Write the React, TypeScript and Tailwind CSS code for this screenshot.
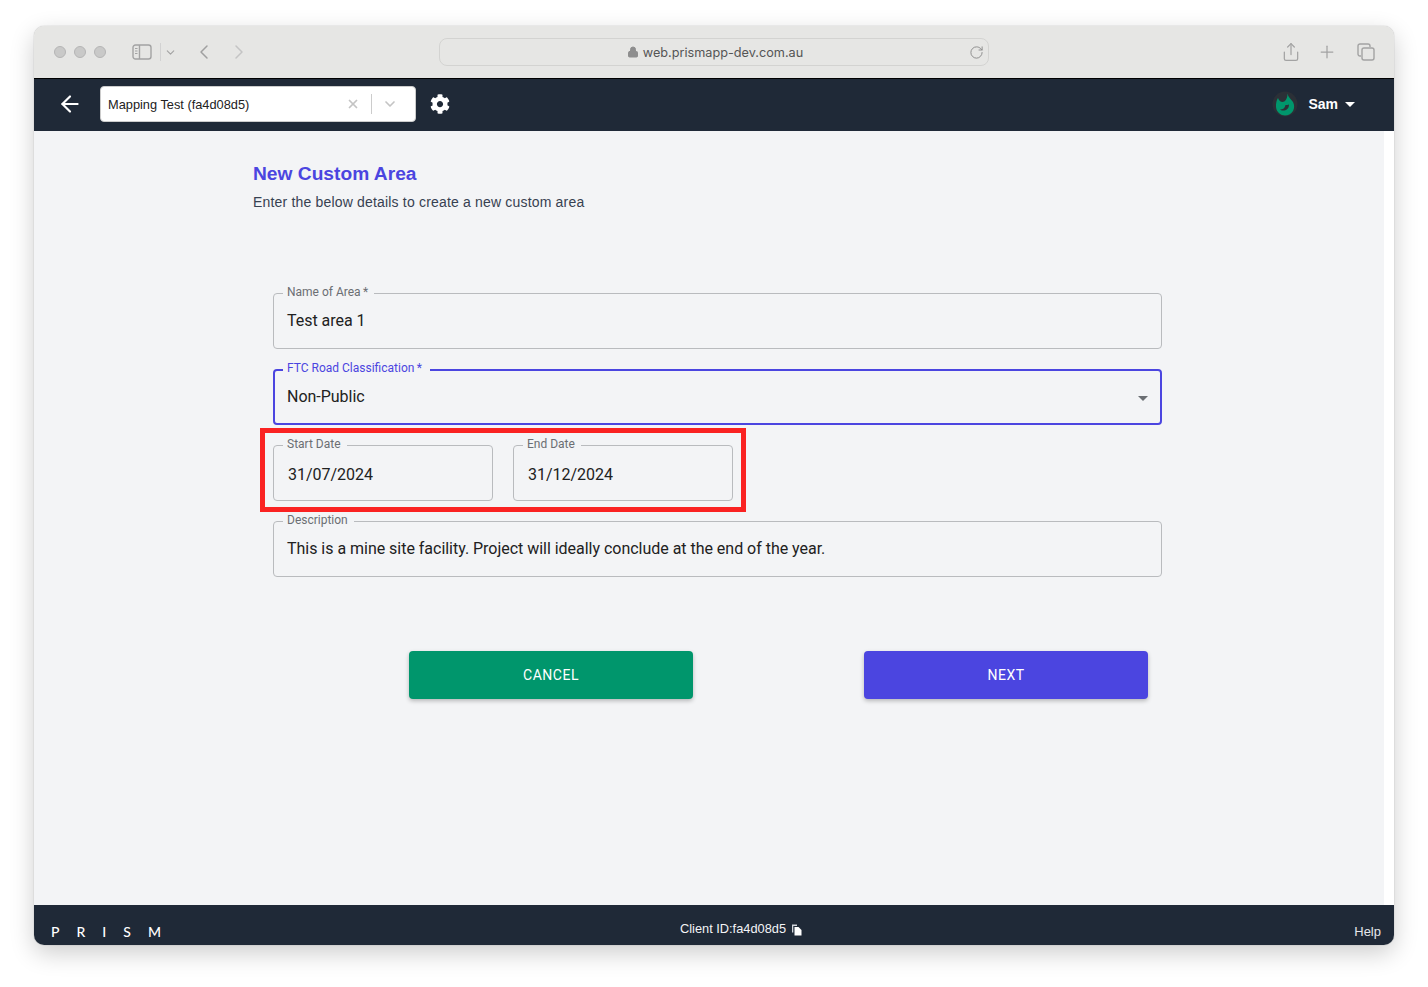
import { ArrowLeft, ChevronDown, ChevronLeft, ChevronRight, Lock, Plus, RotateCw, Share, X } from "lucide-react";
import { FaCog } from "react-icons/fa";

function OutlinedField({
    label,
    value,
    focused = false,
    className = "",
    valueClass = "pl-[14px]",
    children,
}: {
    label: string;
    value: string;
    focused?: boolean;
    className?: string;
    valueClass?: string;
    children?: React.ReactNode;
}) {
    return (
        <div className={`relative flex h-14 items-center pr-[14px] ${className}`}>
            <span className={`text-base tracking-[-0.025px] text-[#212121] ${valueClass}`}>{value}</span>
            {children}
            {/* Notched outline */}
            <fieldset
                className={`pointer-events-none absolute inset-x-0 bottom-0 rounded-[4px] pl-[9px] ${
                    focused ? "-top-[7px] border-2 border-[#4b45e0]" : "-top-[8px] border border-[#b9bbbe]"
                }`}
            >
                <legend
                    className={`pl-[4px] text-xs leading-[16px] ${focused ? "-ml-px pr-[8px] text-[#4b45e0]" : "pr-[6px] text-[#6b6e73]"}`}
                >
                    <span className={focused ? "relative -top-[2px]" : "relative -top-px"}>{label}</span>
                </legend>
            </fieldset>
        </div>
    );
}

function SidebarIcon() {
    return (
        <svg width="20" height="16" viewBox="0 0 20 16" fill="none" stroke="#a3a3a3" strokeWidth="1.4">
            <rect x="1" y="1" width="18" height="14" rx="2.5" />
            <path d="M7.5 1v14" />
            <path d="M3 4.5h2.5M3 7h2.5M3 9.5h2.5" strokeWidth="1" />
        </svg>
    );
}

function TabsIcon() {
    return (
        <svg width="18" height="18" viewBox="0 0 18 18" fill="none" stroke="#a3a3a3" strokeWidth="1.4">
            <path d="M4 13H3a2 2 0 0 1-2-2V3a2 2 0 0 1 2-2h8a2 2 0 0 1 2 2v1" />
            <rect x="5" y="5" width="12" height="12" rx="2" />
        </svg>
    );
}

function FlameLogo() {
    return (
        <svg width="26" height="26" viewBox="0 0 26 26">
            <circle cx="13" cy="13" r="12.500" fill="#2b3037" />
            <path
                d="M15.500 2.500C16 6 19 8 21 11c1.500 3 1.500 6 0 9-2 3-5 4.500-8 4.500-4 0-8.500-3-9-8.500-.2-3.500.5-7 2-9 1 2.500 2.500 4 4.500 4 2.500 0 5-3 5-8.500Z"
                fill="#00966c"
            />
            <path d="M17 13.500c0 4-2.500 6-6 6-1.500 0-2.500-.5-3-1 3 0 5-1.500 5.500-4.500 1 0 2.500 0 3.500-.5Z" fill="#2b3037" />
        </svg>
    );
}

function CopyIcon() {
    return (
        <svg width="11" height="12" viewBox="0 0 11 12">
            <path d="M1 0.500h5v1.500H2.300v6.500H1Z" fill="#d1d5db" />
            <path d="M3.500 3h4l3 3v5.500h-7Z" fill="#ffffff" />
        </svg>
    );
}

export default function App() {
    return (
        <div className="h-[987px] w-[1428px] overflow-hidden bg-white pl-[34px] pt-[26px] font-['Roboto',sans-serif]">
            <div className="flex h-[919px] w-[1360px] flex-col overflow-hidden rounded-[10px] shadow-[0_0_1px_rgba(0,0,0,0.45),0_8px_24px_rgba(0,0,0,0.2)]">
                {/* Safari toolbar */}
                <div className="flex h-[52px] shrink-0 items-center bg-[#e6e6e4] pl-[20px] pr-[19px]">
                    <div className="flex gap-[8px]">
                        <span className="h-3 w-3 rounded-full border border-[#b5b5b5] bg-[#c9c9c8]" />
                        <span className="h-3 w-3 rounded-full border border-[#b5b5b5] bg-[#c9c9c8]" />
                        <span className="h-3 w-3 rounded-full border border-[#b5b5b5] bg-[#c9c9c8]" />
                    </div>
                    <div className="ml-[26px] flex items-center">
                        <SidebarIcon />
                        <span className="ml-[8px] h-[18px] w-px bg-[#d2d2d2]" />
                        <ChevronDown className="ml-[3px] h-[13px] w-[13px] text-[#a3a3a3]" strokeWidth={2} />
                    </div>
                    <ChevronLeft className="ml-[15px] h-[24px] w-[24px] text-[#a0a0a0]" strokeWidth={1.5} />
                    <ChevronRight className="ml-[11px] h-[24px] w-[24px] text-[#c4c4c4]" strokeWidth={1.5} />
                    <div className="relative ml-[188px] flex h-[28px] w-[550px] items-center justify-center rounded-[8px] border border-[#d3d3d1] bg-[#e6e6e4] font-['Inter',sans-serif] text-[12.7px] text-[#555555]">
                        <Lock className="ml-[2px] mr-[4px] h-[12px] w-[12px] fill-[#8e8e8e] text-[#8e8e8e]" strokeWidth={2} />
                        <span className="pt-px">web.prismapp-dev.com.au</span>
                        <RotateCw className="absolute right-[4px] top-[6px] h-[15px] w-[15px] text-[#8a8a8a]" strokeWidth={1.5} />
                    </div>
                    <Share className="ml-auto h-[20px] w-[20px] text-[#a3a3a3]" strokeWidth={1.5} />
                    <Plus className="ml-[16px] h-[20px] w-[20px] text-[#a3a3a3]" strokeWidth={1.5} />
                    <div className="ml-[20px]">
                        <TabsIcon />
                    </div>
                </div>

                {/* App header */}
                <header className="flex h-[53px] shrink-0 items-center border-t border-black bg-[#1f2937] pb-[2px] pl-[23px] pr-[39px] font-['Liberation_Sans',sans-serif]">
                    <ArrowLeft className="h-[26px] w-[26px] text-white" strokeWidth={2} />
                    <div className="ml-[17px] flex h-[36px] w-[316px] items-center rounded-[4px] border border-[#cccccc] bg-white pl-[7px] pr-[17px]">
                        <span className="pt-px text-[12.8px] text-[#222222]">Mapping Test (fa4d08d5)</span>
                        <X className="ml-auto h-[14px] w-[14px] text-[#c4c4c4]" strokeWidth={3} />
                        <span className="ml-[11px] h-[20px] w-px bg-[#cccccc]" />
                        <ChevronDown className="ml-[10px] h-[16px] w-[16px] text-[#c4c4c4]" strokeWidth={2.5} />
                    </div>
                    <FaCog className="ml-[14px] h-[20px] w-[20px] text-white" />
                    <div className="ml-auto flex items-center">
                        <FlameLogo />
                        <span className="ml-[10px] text-sm font-bold text-white">Sam</span>
                        <span className="ml-[7px] h-0 w-0 border-x-[5px] border-t-[5px] border-x-transparent border-t-white" />
                    </div>
                </header>

                {/* Page body */}
                <div className="flex min-h-0 flex-1">
                    <main className="flex-1 bg-[#f3f4f6] pl-[219px] pt-[31px]">
                        <h1 className="font-['Liberation_Sans',sans-serif] text-[19.2px] leading-[24px] font-bold text-[#4b45e0]">New Custom Area</h1>
                        <p className="mt-[6px] font-['Liberation_Sans',sans-serif] text-sm leading-[20px] tracking-[0.18px] text-[#374151]">
                            Enter the below details to create a new custom area
                        </p>

                        <form className="ml-[20px] mt-[81px] flex w-[889px] flex-col gap-[20px]">
                            <OutlinedField label={"Name of Area\u2009*"} value="Test area 1" />
                            <OutlinedField label={"FTC Road Classification\u2009*"} value="Non-Public" focused>
                                <span className="absolute right-[14px] top-[27px] h-0 w-0 border-x-[5px] border-t-[5px] border-x-transparent border-t-[#6b6e73]" />
                            </OutlinedField>

                            <div className="relative flex gap-[20px]">
                                <OutlinedField className="w-[220px]" label="Start Date" value="31/07/2024" valueClass="pl-[15px] pt-[4px]" />
                                <OutlinedField className="w-[220px]" label="End Date" value="31/12/2024" valueClass="pl-[15px] pt-[4px]" />
                                {/* Red annotation box from the screenshot */}
                                <div className="pointer-events-none absolute -left-[13px] -top-[17px] h-[84px] w-[486px] border-[5px] border-[#fa2222]" />
                            </div>

                            <OutlinedField
                                label="Description"
                                value="This is a mine site facility. Project will ideally conclude at the end of the year."
                            />
                        </form>

                        <div className="ml-[156px] mt-[74px] flex w-[739px] justify-between">
                            <button className="h-12 w-[284px] rounded-[4px] bg-[#00966c] text-sm tracking-[0.5px] text-white shadow-[0_2px_4px_rgba(0,0,0,0.25)]">
                                CANCEL
                            </button>
                            <button className="h-12 w-[284px] rounded-[4px] bg-[#4b45e0] text-sm tracking-[0.5px] text-white shadow-[0_2px_4px_rgba(0,0,0,0.25)]">
                                NEXT
                            </button>
                        </div>
                    </main>
                    <div className="w-[10px] bg-white" />
                </div>

                {/* Footer */}
                <footer className="relative flex h-[40px] shrink-0 items-end justify-between bg-[#1f2937] pb-[4px] pl-[17px] pr-[13px] font-['Liberation_Sans',sans-serif] text-white">
                    <span className="font-['Lato',sans-serif] text-sm leading-[18px] font-medium tracking-[17px]">PRISM</span>
                    <span className="absolute left-[646px] top-[15px] flex items-center text-[12.8px] leading-[18px] text-[#f3f4f6]">
                        Client ID:fa4d08d5
                        <span className="ml-[5px] mt-[2px]">
                            <CopyIcon />
                        </span>
                    </span>
                    <span className="text-[13px] leading-[18px] text-[#e5e7eb]">Help</span>
                </footer>
            </div>
        </div>
    );
}
